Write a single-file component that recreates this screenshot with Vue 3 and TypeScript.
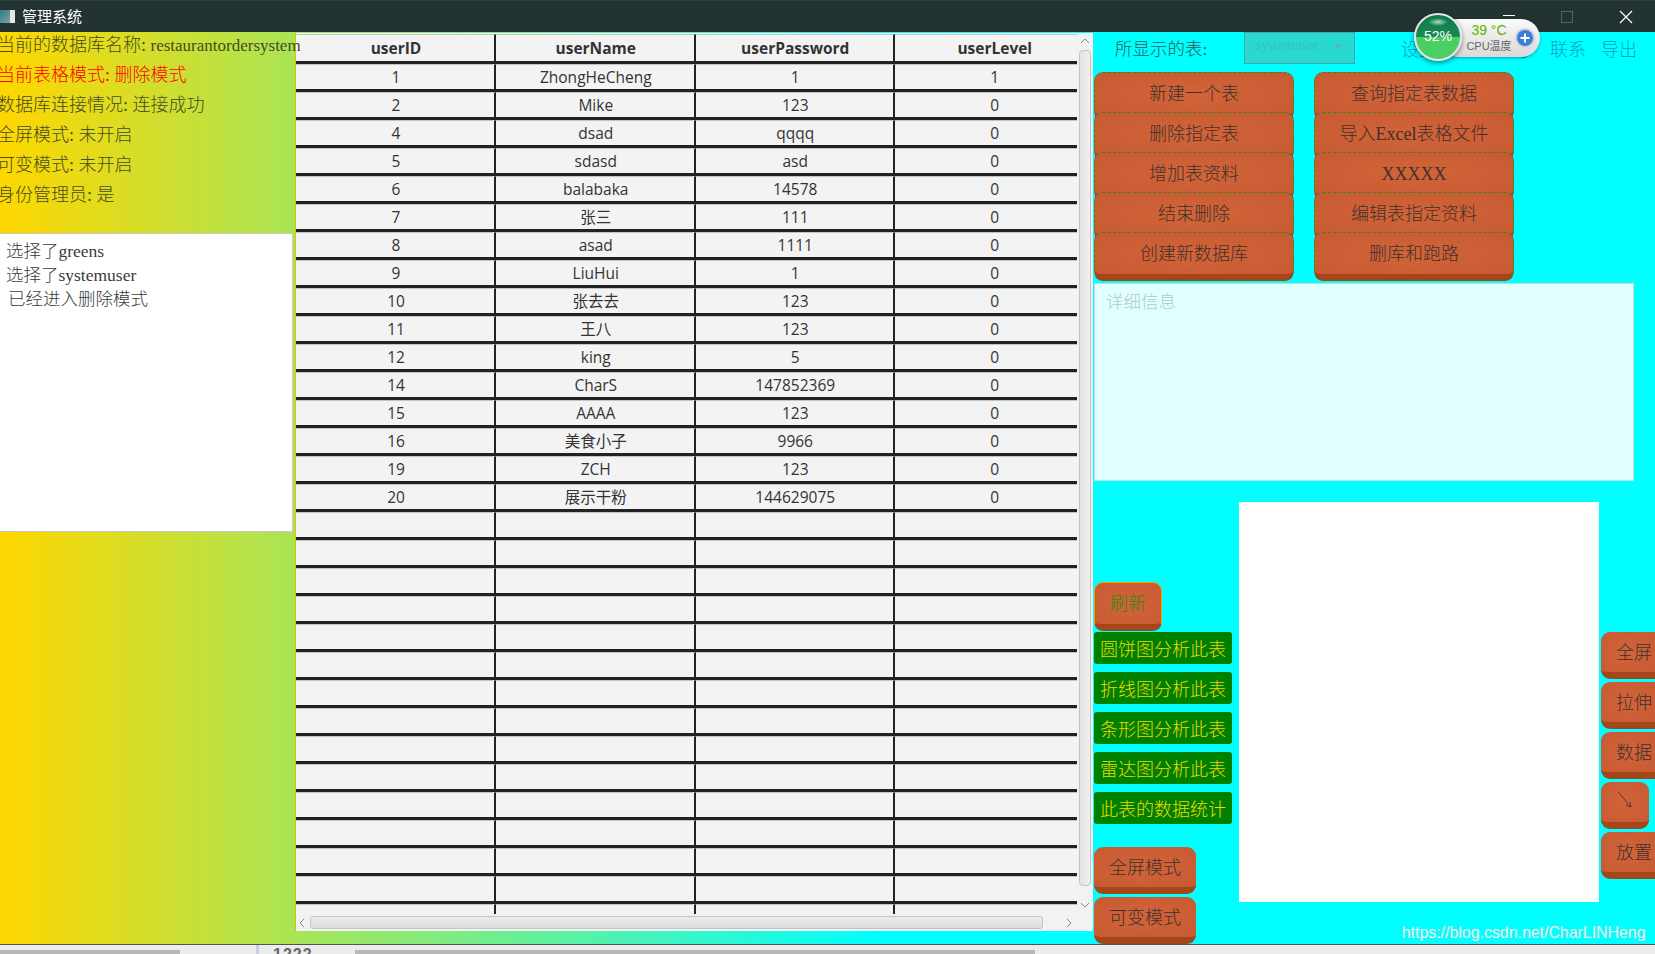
<template>
  <div class="app">
    <header class="titlebar">
      <div class="app-icon"><span class="app-icon-inner"></span></div>
      <span class="app-title">管理系统</span>
      <div class="win-buttons">
        <span class="win-min"></span>
        <span class="win-max"></span>
        <svg class="win-close" width="14" height="14" viewBox="0 0 14 14">
          <path d="M1 1 L13 13 M13 1 L1 13" stroke="#fff" stroke-width="1.2" fill="none" />
        </svg>
      </div>
    </header>

    <main class="main">
      <aside class="left">
        <div class="info">
          <div class="info-line">当前的数据库名称: <span class="db-name">restaurantordersystem</span></div>
          <div v-for="line in infoLines" :key="line.text" :class="['info-line', { danger: line.danger }]">
            {{ line.text }}
          </div>
        </div>
        <div class="log">
          <div class="log-line">选择了greens</div>
          <div class="log-line">选择了systemuser</div>
          <div class="log-line indent">已经进入删除模式</div>
        </div>
      </aside>

      <section class="table-wrap">
        <div class="table-body">
          <div class="table-view">
            <div class="row head">
              <div v-for="c in columns" :key="c" class="cell">{{ c }}</div>
            </div>
            <div v-for="(r, i) in rows" :key="i" class="row">
              <div v-for="(v, j) in r" :key="j" class="cell">{{ v }}</div>
            </div>
          </div>
          <div class="vbar">
            <svg class="chev" width="10" height="6" viewBox="0 0 10 6"><path d="M1 5 L5 1 L9 5" stroke="#888" fill="none" /></svg>
            <div class="vthumb"></div>
            <svg class="chev" width="10" height="6" viewBox="0 0 10 6"><path d="M1 1 L5 5 L9 1" stroke="#888" fill="none" /></svg>
          </div>
        </div>
        <div class="hbar">
          <svg class="hchev" width="6" height="10" viewBox="0 0 6 10"><path d="M5 1 L1 5 L5 9" stroke="#888" fill="none" /></svg>
          <div class="hthumb"></div>
          <svg class="hchev" width="6" height="10" viewBox="0 0 6 10"><path d="M1 1 L5 5 L1 9" stroke="#888" fill="none" /></svg>
        </div>
      </section>

      <section class="right">
        <div class="topline">
          <span class="shown-label">所显示的表:</span>
          <div class="combo">
            <span>systemuser</span>
            <i class="combo-arrow"></i>
          </div>
          <nav class="menu">
            <span>设置</span>
            <span class="menu-about">关于</span>
            <span>联系</span>
            <span>导出</span>
          </nav>
        </div>

        <div class="btn-grid">
          <div v-for="(col, i) in actionCols" :key="i" class="btn-col">
            <button v-for="b in col" :key="b" class="btn action">{{ b }}</button>
          </div>
        </div>

        <div class="detail">详细信息</div>

        <div class="lower">
          <div class="tools">
            <button class="btn refresh">刷新</button>
            <button v-for="b in chartButtons" :key="b" class="chart-btn">{{ b }}</button>
            <button class="btn mode first-mode">全屏模式</button>
            <button class="btn mode">可变模式</button>
          </div>
          <div class="canvas"></div>
          <div class="side">
            <button class="btn side-btn">全屏</button>
            <button class="btn side-btn">拉伸</button>
            <button class="btn side-btn">数据</button>
            <button class="btn side-btn arrow">
              <svg width="16" height="18" viewBox="0 0 16 18">
                <path d="M1 1 L14 16 M14 16 L13 11 M14 16 L9 14" stroke="#5a3a30" fill="none" />
              </svg>
            </button>
            <button class="btn side-btn">放置</button>
          </div>
        </div>
      </section>

      <div class="cpu-widget">
        <div class="cpu-pill">
          <div class="cpu-text">
            <span class="cpu-temp">39 °C</span>
            <span class="cpu-label">CPU温度</span>
          </div>
          <span class="cpu-plus">
            <svg width="10" height="10" viewBox="0 0 10 10"><path d="M5 0.5 V9.5 M0.5 5 H9.5" stroke="#fff" stroke-width="2" /></svg>
          </span>
        </div>
        <div class="cpu-ball"><span>52%</span></div>
      </div>
      <div class="watermark">https://blog.csdn.net/CharLINHeng</div>
    </main>

    <footer class="strip">
      <div class="strip-a"></div>
      <div class="strip-div"></div>
      <div class="strip-num">1222</div>
      <div class="strip-b"></div>
    </footer>
  </div>
</template>

<script setup lang="ts">
const infoLines = [
  { text: '当前表格模式: 删除模式', danger: true },
  { text: '数据库连接情况: 连接成功', danger: false },
  { text: '全屏模式: 未开启', danger: false },
  { text: '可变模式: 未开启', danger: false },
  { text: '身份管理员: 是', danger: false },
];

const columns = ['userID', 'userName', 'userPassword', 'userLevel'];

const data: string[][] = [
  ['1', 'ZhongHeCheng', '1', '1'],
  ['2', 'Mike', '123', '0'],
  ['4', 'dsad', 'qqqq', '0'],
  ['5', 'sdasd', 'asd', '0'],
  ['6', 'balabaka', '14578', '0'],
  ['7', '张三', '111', '0'],
  ['8', 'asad', '1111', '0'],
  ['9', 'LiuHui', '1', '0'],
  ['10', '张去去', '123', '0'],
  ['11', '王八', '123', '0'],
  ['12', 'king', '5', '0'],
  ['14', 'CharS', '147852369', '0'],
  ['15', 'AAAA', '123', '0'],
  ['16', '美食小子', '9966', '0'],
  ['19', 'ZCH', '123', '0'],
  ['20', '展示干粉', '144629075', '0'],
];

// empty rows fill the rest of the table view
const rows: string[][] = [...data, ...Array.from({ length: 15 }, () => ['', '', '', ''])];

const actionCols = [
  ['新建一个表', '删除指定表', '增加表资料', '结束删除', '创建新数据库'],
  ['查询指定表数据', '导入Excel表格文件', 'XXXXX', '编辑表指定资料', '删库和跑路'],
];

const chartButtons = ['圆饼图分析此表', '折线图分析此表', '条形图分析此表', '雷达图分析此表', '此表的数据统计'];
</script>

<style>
html,
body {
  margin: 0;
  background: #fff;
}
</style>

<style scoped>
.app {
  width: 1655px;
  height: 954px;
  overflow: hidden;
  display: flex;
  flex-direction: column;
  font-family: "Liberation Serif", "Noto Sans CJK SC", serif;
  font-weight: 300;
}

.titlebar {
  height: 32px;
  flex: none;
  background: #223331;
  border-top: 1px solid #2f403e;
  box-sizing: border-box;
  display: flex;
  align-items: center;
  color: #fff;
}
.app-icon {
  width: 15px;
  height: 13px;
  background: #e6e6e6;
  margin-top: -1px;
}
.app-icon-inner {
  display: block;
  width: 10px;
  height: 13px;
  background: linear-gradient(135deg, #2f7f7a, #7aa0b0);
}
.app-title {
  margin-left: 7px;
  margin-top: -2px;
  font-size: 15px;
  font-family: "Noto Sans CJK SC", sans-serif;
  font-weight: 400;
}
.win-buttons {
  margin-left: auto;
  display: flex;
  align-items: center;
  padding-right: 22px;
}
.win-min {
  width: 12px;
  height: 1px;
  background: #fff;
  margin-bottom: 2px;
}
.win-max {
  width: 10px;
  height: 10px;
  border: 1px solid #56625f;
  margin-left: 46px;
}
.win-close {
  margin-left: 46px;
}

.main {
  flex: 1;
  position: relative;
  display: flex;
  min-height: 0;
  background: linear-gradient(to right, #ffd700 0, #00ffff 880px);
}

.left {
  width: 295px;
  flex: none;
  display: flex;
  flex-direction: column;
  position: relative;
  z-index: 1;
}
.info {
  height: 201px;
  box-sizing: border-box;
  margin-left: -3px;
  white-space: nowrap;
}
.info-line {
  height: 30px;
  line-height: 27px;
  font-size: 18px;
  color: #434d20;
}
.info-line.danger {
  color: #f00;
}
.db-name {
  font-size: 17px;
}
.log {
  width: 293px;
  height: 299px;
  box-sizing: border-box;
  background: #fff;
  border: 1px solid #c8c8c8;
  border-left: 0;
  padding: 5px 6px;
  line-height: 24px;
  color: #3a3a3a;
  font-size: 17.5px;
}
.indent {
  padding-left: 2px;
}

.table-wrap {
  width: 798px;
  flex: none;
  height: 898px;
  margin-top: 1px;
  box-sizing: border-box;
  border-left: 1px solid #d8c400;
  display: flex;
  flex-direction: column;
  background: #f2f2f2;
}
.table-body {
  flex: 1;
  min-height: 0;
  display: flex;
}
.table-view {
  width: 781px;
  overflow: hidden;
  background: #f3f3f3;
  font-family: "Open Sans", "Noto Sans CJK SC", sans-serif;
  font-weight: 400;
  color: #333;
  font-size: 15.5px;
  padding-top: 1px;
}
.row {
  display: grid;
  grid-template-columns: 200px 199.5px 199.5px 199.5px;
  width: 798.5px;
  height: 28px;
  box-sizing: border-box;
  border-bottom: 3px solid #222;
  box-shadow: 0 1px 0 #c4c4c4;
}
.row.head {
  height: 30px;
  font-weight: 700;
}
.cell {
  text-align: center;
  line-height: 25px;
  border-right: 2px solid #222;
  border-top: 1px solid #c4c4c4;
  box-sizing: border-box;
  padding-left: 2px;
  min-width: 0;
}
.head .cell {
  line-height: 27px;
}
.vbar {
  width: 16px;
  flex: none;
  display: flex;
  flex-direction: column;
  align-items: center;
  background: #f2f2f2;
  padding: 5px 0 6px;
  box-sizing: border-box;
  position: relative;
}
.vthumb {
  width: 12px;
  flex: 1;
  margin: 6px 0 16px;
  box-sizing: border-box;
  border: 1px solid #c4c4c4;
  border-radius: 4px;
  background: linear-gradient(to right, #e4e4e4, #f0f0f0);
}
.hbar {
  height: 17px;
  flex: none;
  display: flex;
  align-items: center;
  padding: 0 0 0 3px;
  background: #f2f2f2;
}
.hchev {
  flex: none;
}
.hthumb {
  flex: none;
  width: 733px;
  height: 13px;
  box-sizing: border-box;
  margin: 0 23px 0 5px;
  border: 1px solid #c4c4c4;
  border-radius: 3px;
  background: linear-gradient(to bottom, #ebebeb, #dedede);
}

.right {
  flex: 1;
  min-width: 0;
  display: flex;
  flex-direction: column;
  padding-left: 1px;
}
.topline {
  height: 40px;
  display: flex;
  align-items: flex-start;
  white-space: nowrap;
}
.shown-label {
  margin-left: 21px;
  margin-top: 3px;
  font-size: 17.5px;
  color: #2a5a5a;
  width: 129px;
  flex: none;
}
.combo {
  width: 111px;
  height: 32px;
  flex: none;
  box-sizing: border-box;
  background: #2ad8d2;
  border: 1px solid #3fa7a7;
  display: flex;
  align-items: center;
  justify-content: space-between;
  padding: 0 12px 4px 11px;
  font-size: 14px;
  color: #3bbdbd;
}
.combo-arrow {
  width: 0;
  height: 0;
  border-left: 4px solid transparent;
  border-right: 4px solid transparent;
  border-top: 5px solid #52b8b8;
}
.menu {
  display: flex;
  margin-left: 46px;
  font-size: 18px;
  color: #0f9ccc;
  margin-top: 3px;
}
.menu span {
  width: 35px;
  flex: none;
}
.menu span + span {
  margin-left: 16px;
}
.menu .menu-about {
  margin-left: 63px;
}

.btn {
  display: block;
  flex: none;
  box-sizing: border-box;
  font: inherit;
  font-size: 18px;
  line-height: 22px;
  color: #40302e;
  background: radial-gradient(ellipse at center, #d16438 0, #c75a32 100%);
  border: 0;
  border-bottom: 7px solid #a4451a;
  border-radius: 9px;
  padding: 2px 0 0;
  text-align: center;
}
.btn-grid {
  display: flex;
  gap: 20px;
  height: 211px;
}
.btn-col {
  width: 200px;
  flex: none;
  display: flex;
  flex-direction: column;
}
.action {
  width: 200px;
  height: 49px;
  margin-bottom: -9px;
  border: 1px dashed #2f8a1e;
  border-bottom: 7px solid #a4451a;
  padding: 0;
  position: relative;
}

.detail {
  width: 540px;
  height: 198px;
  flex: none;
  box-sizing: border-box;
  background: #e0ffff;
  border: 1px solid #c9dcdc;
  padding: 4px 11px;
  font-size: 17.5px;
  color: #b4c8c8;
}

.lower {
  flex: 1;
  min-height: 0;
  display: flex;
}
.tools {
  width: 145px;
  flex: none;
  display: flex;
  flex-direction: column;
  align-items: flex-start;
  padding-top: 101px;
}
.refresh {
  width: 68px;
  height: 49px;
  border: 1px solid #f0a500;
  border-bottom: 7px solid #a4451a;
  color: #2d8a10;
  margin-bottom: 1px;
  padding: 0;
}
.chart-btn {
  width: 138px;
  height: 32px;
  flex: none;
  margin-bottom: 8px;
  box-sizing: border-box;
  border: 0;
  border-radius: 3px;
  background: #008000;
  color: #f0d800;
  font: inherit;
  font-size: 18px;
  padding: 0;
}
.mode {
  width: 102px;
  height: 47px;
  margin-bottom: 3px;
}
.first-mode {
  margin-top: 15px;
}
.canvas {
  width: 360px;
  height: 400px;
  margin-top: 21px;
  flex: none;
  background: #fff;
}
.side {
  flex: none;
  margin-left: 2px;
  padding-top: 151px;
  display: flex;
  flex-direction: column;
  gap: 3px;
}
.side-btn {
  width: 54px;
  height: 47px;
  border-radius: 9px 0 0 9px;
  text-align: left;
  padding-left: 15px;
  white-space: nowrap;
}
.arrow {
  width: 48px;
  border-radius: 9px;
  display: flex;
  align-items: center;
  justify-content: center;
  padding: 0 0 4px;
}

.cpu-widget {
  position: absolute;
  left: 1413px;
  top: -19px;
  width: 128px;
  height: 50px;
  z-index: 2;
}
.cpu-pill {
  position: absolute;
  left: 26px;
  top: 6px;
  width: 101px;
  height: 38px;
  border-radius: 19px;
  background: linear-gradient(to bottom, #fafafa, #d9d9d9);
  box-shadow: 0 1px 3px rgba(0, 0, 0, 0.35);
  display: flex;
  align-items: center;
  font-family: "Liberation Sans", "Noto Sans CJK SC", sans-serif;
  font-weight: 400;
}
.cpu-text {
  display: flex;
  flex-direction: column;
  align-items: center;
  margin-left: 26px;
  width: 48px;
}
.cpu-temp {
  color: #5fb000;
  font-size: 14px;
  line-height: 17px;
}
.cpu-label {
  color: #666;
  font-size: 11px;
  line-height: 15px;
  white-space: nowrap;
}
.cpu-plus {
  width: 16px;
  height: 16px;
  margin-left: 4px;
  flex: none;
  border-radius: 50%;
  background: #3a7fdc;
  box-shadow: 0 0 0 2px #d2d2d2;
  display: flex;
  align-items: center;
  justify-content: center;
}
.cpu-ball {
  position: absolute;
  left: 1px;
  top: 0;
  width: 48px;
  height: 48px;
  box-sizing: border-box;
  border: 2px solid #e6e6e6;
  border-radius: 50%;
  background:
    radial-gradient(ellipse 10px 4px at 50% 16%, rgba(255, 255, 255, 0.7), rgba(255, 255, 255, 0)),
    linear-gradient(to bottom, #0c7a48 0, #1a8a55 50%, #4bcf63 50%, #4bcf63 100%);
  box-shadow: 0 2px 5px rgba(0, 0, 0, 0.45);
  display: flex;
  align-items: center;
  justify-content: center;
  color: #fff;
  font-family: "Liberation Sans", sans-serif;
  font-weight: 400;
  font-size: 14px;
  padding-bottom: 2px;
}
.watermark {
  position: absolute;
  left: 1402px;
  top: 892px;
  font-family: "Liberation Sans", sans-serif;
  font-weight: 400;
  font-size: 15.9px;
  color: #d8fbfb;
  text-shadow: 0 0 1px #9fbcbc;
  white-space: nowrap;
}

.strip {
  height: 10px;
  flex: none;
  box-sizing: border-box;
  border-top: 1px solid #47555c;
  background: #ececec;
  position: relative;
  overflow: hidden;
}
.strip-a,
.strip-b {
  position: absolute;
  bottom: 0;
  height: 4px;
  background: #b8b8b8;
}
.strip-a {
  left: 0;
  width: 180px;
}
.strip-b {
  left: 355px;
  width: 680px;
}
.strip-div {
  position: absolute;
  left: 256px;
  top: 0;
  bottom: 0;
  width: 3px;
  background: #c8d0e0;
}
.strip-num {
  position: absolute;
  left: 273px;
  top: 1px;
  font-family: "Liberation Sans", sans-serif;
  font-weight: 700;
  font-size: 16px;
  letter-spacing: 1px;
  color: #666;
}
</style>
